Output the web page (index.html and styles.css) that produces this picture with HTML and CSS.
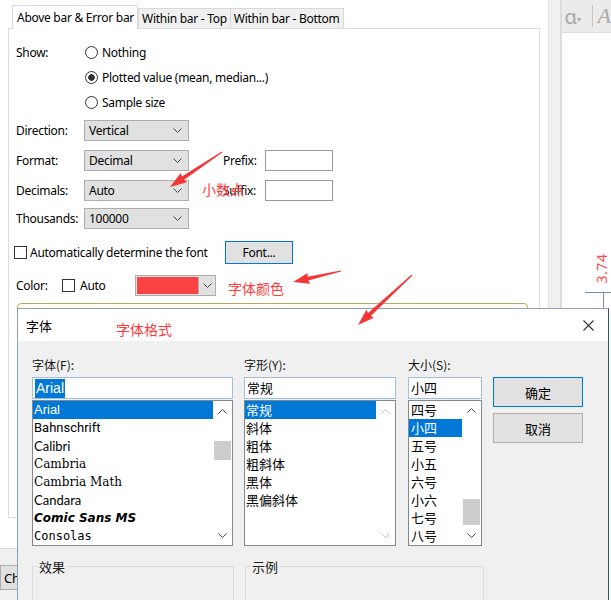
FILE: index.html
```html
<!DOCTYPE html>
<html lang="zh-CN">
<head>
  <meta charset="UTF-8">
  <title>Number labels - 字体</title>
  <link rel="stylesheet" href="styles.css">
</head>
<body>
  <div class="screen">
    <!-- Options window -->
    <div class="main">
      <div class="tabs">
        <div class="tab active">Above bar &amp; Error bar</div>
        <div class="tab">Within bar - Top</div>
        <div class="tab">Within bar - Bottom</div>
      </div>

      <div class="panel">
        <div class="row show-row">
          <span class="lbl">Show:</span>
          <span class="radio"></span><span>Nothing</span>
        </div>
        <div class="row show-row">
          <span class="lbl"></span>
          <span class="radio on"></span><span>Plotted value (mean, median...)</span>
        </div>
        <div class="row show-row">
          <span class="lbl"></span>
          <span class="radio"></span><span>Sample size</span>
        </div>

        <div class="row field-row">
          <span class="lbl">Direction:</span>
          <div class="select"><span>Vertical</span><svg class="chev" width="9" height="5" viewBox="0 0 9 5"><polyline points="0.5,0.5 4.5,4.5 8.5,0.5"/></svg></div>
        </div>
        <div class="row field-row">
          <span class="lbl">Format:</span>
          <div class="select"><span>Decimal</span><svg class="chev" width="9" height="5" viewBox="0 0 9 5"><polyline points="0.5,0.5 4.5,4.5 8.5,0.5"/></svg></div>
          <span class="affix">Prefix:</span>
          <div class="textbox"></div>
        </div>
        <div class="row field-row">
          <span class="lbl">Decimals:</span>
          <div class="select"><span>Auto</span><svg class="chev" width="9" height="5" viewBox="0 0 9 5"><polyline points="0.5,0.5 4.5,4.5 8.5,0.5"/></svg></div>
          <span class="affix">Suffix:</span>
          <div class="textbox"></div>
        </div>
        <div class="row thousands-row">
          <span class="lbl">Thousands:</span>
          <div class="select"><span>100000</span><svg class="chev" width="9" height="5" viewBox="0 0 9 5"><polyline points="0.5,0.5 4.5,4.5 8.5,0.5"/></svg></div>
        </div>

        <div class="row font-row">
          <span class="check first"></span>
          <span class="auto-font">Automatically determine the font</span>
          <div class="btn focus font-btn">Font...</div>
        </div>
        <div class="row color-row">
          <span class="lbl color-lbl">Color:</span>
          <span class="check"></span>
          <span class="auto-color">Auto</span>
          <div class="color-pick">
            <span class="swatch"></span>
            <span class="drop"><svg class="chev" width="9" height="5" viewBox="0 0 9 5"><polyline points="0.5,0.5 4.5,4.5 8.5,0.5"/></svg></span>
          </div>
        </div>
      </div>

      <div class="under"></div>
      <div class="footer"><div class="btn chart-btn">Ch</div></div>
    </div>

    <div class="strip"></div>

    <!-- Chart behind -->
    <div class="chart">
      <div class="toolbar">
        <span class="tb-alpha">α<small>▾</small></span>
        <span class="tb-sep"></span>
        <span class="tb-a">A</span>
      </div>
      <span class="bar-value">3.74</span>
      <span class="err-h"></span>
      <span class="err-v"></span>
    </div>

    <!-- Font dialog -->
    <div class="tip-edge"></div>
    <div class="dialog">
      <div class="titlebar">
        <span>字体</span>
        <svg width="11" height="11" viewBox="0 0 11 11"><path d="M0.5 0.5 L10.5 10.5 M10.5 0.5 L0.5 10.5" stroke="#333" stroke-width="1.1"/></svg>
      </div>
      <div class="dlg-body">
        <div class="cols">
          <div class="col col-face">
            <div class="col-lbl">字体(F):</div>
            <div class="input"><span class="sel-text">Arial</span></div>
            <div class="list">
              <div class="items">
                <div class="item selected f-arial">Arial</div>
                <div class="item f-bahn">Bahnschrift</div>
                <div class="item f-calibri">Calibri</div>
                <div class="item f-cambria">Cambria</div>
                <div class="item f-cambria">Cambria Math</div>
                <div class="item f-candara">Candara</div>
                <div class="item f-comic">Comic Sans MS</div>
                <div class="item f-consolas">Consolas</div>
              </div>
              <div class="scroll">
                <span class="arrow up"><svg width="9" height="5" viewBox="0 0 9 5"><polyline points="0.5,4.5 4.5,0.5 8.5,4.5"/></svg></span>
                <span class="thumb face-thumb"></span>
                <span class="arrow down"><svg width="9" height="5" viewBox="0 0 9 5"><polyline points="0.5,0.5 4.5,4.5 8.5,0.5"/></svg></span>
              </div>
            </div>
          </div>

          <div class="col col-style">
            <div class="col-lbl">字形(Y):</div>
            <div class="input">常规</div>
            <div class="list">
              <div class="items">
                <div class="item selected">常规</div>
                <div class="item">斜体</div>
                <div class="item">粗体</div>
                <div class="item">粗斜体</div>
                <div class="item">黑体</div>
                <div class="item">黑偏斜体</div>
              </div>
              <div class="scroll disabled">
                <span class="arrow up"><svg width="9" height="5" viewBox="0 0 9 5"><polyline points="0.5,4.5 4.5,0.5 8.5,4.5"/></svg></span>
                <span class="arrow down"><svg width="9" height="5" viewBox="0 0 9 5"><polyline points="0.5,0.5 4.5,4.5 8.5,0.5"/></svg></span>
              </div>
            </div>
          </div>

          <div class="col col-size">
            <div class="col-lbl">大小(S):</div>
            <div class="input">小四</div>
            <div class="list">
              <div class="items">
                <div class="item">四号</div>
                <div class="item selected">小四</div>
                <div class="item">五号</div>
                <div class="item">小五</div>
                <div class="item">六号</div>
                <div class="item">小六</div>
                <div class="item">七号</div>
                <div class="item">八号</div>
              </div>
              <div class="scroll">
                <span class="arrow up"><svg width="9" height="5" viewBox="0 0 9 5"><polyline points="0.5,4.5 4.5,0.5 8.5,4.5"/></svg></span>
                <span class="thumb size-thumb"></span>
                <span class="arrow down"><svg width="9" height="5" viewBox="0 0 9 5"><polyline points="0.5,0.5 4.5,4.5 8.5,0.5"/></svg></span>
              </div>
            </div>
          </div>

          <div class="col col-btns">
            <div class="btn focus dlg-btn">确定</div>
            <div class="btn dlg-btn">取消</div>
          </div>
        </div>

        <div class="groups">
          <fieldset class="group effects"><legend>效果</legend></fieldset>
          <fieldset class="group sample"><legend>示例</legend></fieldset>
        </div>
      </div>
    </div>

    <!-- Red annotations -->
    <span class="note note-decimals">小数点</span>
    <span class="note note-color">字体颜色</span>
    <span class="note note-font">字体格式</span>
    <svg class="arrows" width="611" height="600" viewBox="0 0 611 600">
      <g transform="translate(222 152) rotate(146.1)">
        <polygon points="0,-0.6 47,-2 46,-5.5 62.7,0 46,5.5 47,2 0,0.6"/>
      </g>
      <g transform="translate(341 271) rotate(167.1)">
        <polygon points="0,-0.6 34,-2 33,-5.5 49.2,0 33,5.5 34,2 0,0.6"/>
      </g>
      <g transform="translate(412 275) rotate(137.2)">
        <polygon points="0,-0.6 58,-2 57,-5.5 73.6,0 57,5.5 58,2 0,0.6"/>
      </g>
    </svg>
  </div>
</body>
</html>
```

FILE: styles.css
```css
:root {
  --ui-font: "Noto Sans", "Noto Sans CJK SC", sans-serif;
  --cjk-font: "Noto Sans CJK SC", sans-serif;
  --border: #dcdcdc;
  --control: #e1e1e1;
  --control-border: #adadad;
  --focus: #0078d7;
  --note: #ff3b3b;
}
* { box-sizing: border-box; }
body {
  margin: 0;
  background: #fff;
  font-family: var(--ui-font);
  font-size: 12px;
  color: #000;
}
.screen {
  position: relative;
  width: 611px; height: 600px;
  overflow: hidden;
  display: flex;
}

/* options window */
.main { width: 548px; display: flex; flex-direction: column; background: #fff; letter-spacing: -0.28px; }
.tabs {
  display: flex; align-items: flex-end;
  height: 28px; padding-left: 12px;
  position: relative; z-index: 1;
}
.tab {
  height: 20px; padding: 0 3px;
  display: flex; align-items: center;
  background: #f0f0f0;
  border: 1px solid #d9d9d9; border-bottom: none;
  margin-left: -1px; white-space: nowrap;
}
.tab.active {
  height: 24px; margin-bottom: -1px; margin-left: 0;
  background: #fff; padding: 0 3px 0 4px;
}
.tab.active + .tab { margin-left: 0; }

.panel {
  margin-left: 8px;
  width: 532px; height: 490px;
  border: 1px solid var(--border);
  padding: 11px 0 0 7px;
}
.row { display: flex; align-items: center; white-space: nowrap; }
.show-row { height: 25px; }
.field-row { height: 30px; }
.thousands-row { height: 27px; }
.font-row { height: 40px; }
.color-row { height: 26px; }
.lbl { width: 68px; }
.color-lbl { width: 46px; }

.radio {
  width: 13px; height: 13px; border-radius: 50%;
  border: 1px solid #333; background: #fff;
  margin: 0 4px 0 1px;
}
.radio.on { background: radial-gradient(circle, #333 0 3px, #fff 3.6px); }

.select {
  width: 105px; height: 21px;
  background: var(--control); border: 1px solid var(--control-border);
  display: flex; align-items: center; justify-content: space-between;
  padding: 0 6px 0 4px;
}
.chev polyline, .arrow polyline { fill: none; stroke: #444; stroke-width: 1; }
.affix { margin-left: 34px; width: 42px; }
.textbox { width: 68px; height: 21px; background: #fff; border: 1px solid #9a9a9a; }

.check { width: 13px; height: 13px; border: 1px solid #333; background: #fff; }
.check.first { margin-left: -2px; }
.auto-font { width: 198px; padding-left: 3px; }
.btn {
  display: flex; align-items: center; justify-content: center;
  background: var(--control); border: 1px solid var(--control-border);
}
.btn.focus { border-color: var(--focus); }
.font-btn { width: 68px; height: 23px; }
.auto-color { width: 60px; padding-left: 5px; }
.color-pick {
  width: 81px; height: 21px; display: flex;
  border: 1px solid var(--control-border); padding: 1px 0 1px 1px;
  background: var(--control);
}
.swatch { width: 61px; background: #fa4343; }
.drop { flex: 1; display: flex; align-items: center; justify-content: center; border-left: 1px solid var(--control-border); }

.under { height: 30px; }
.footer { flex: 1; background: #f0f0f0; border-top: 1px solid #d9d9d9; padding-top: 16px; }
.chart-btn { width: 40px; height: 25px; justify-content: flex-start; padding-left: 3px; font-size: 13px; }

.strip { width: 14px; background: #f0f0f0; border-left: 1px solid #e6e6e6; border-right: 2px solid #dcdcdc; }

/* chart behind */
.chart { flex: 1; position: relative; background: #fff; }
.toolbar {
  height: 33px; background: #ebebeb; border-bottom: 1px solid #dedede;
  display: flex; align-items: center; color: #a8a8a8;
}
.tb-alpha { font-size: 20px; margin-left: 3px; width: 27px; }
.tb-alpha small { font-size: 8px; vertical-align: middle; }
.tb-sep { width: 1px; height: 22px; background: #c8c8c8; }
.tb-a { font-family: "Liberation Serif", serif; font-style: italic; font-size: 22px; margin-left: 5px; }
.bar-value {
  position: absolute; left: 25px; top: 259px;
  transform: rotate(-90deg);
  font-size: 14px; color: #ff4a4a; letter-spacing: 0.5px;
}
.err-h { position: absolute; left: 23px; right: 0; top: 292px; height: 1px; background: #6f8fb5; }
.err-v { position: absolute; left: 41px; top: 292px; width: 1px; height: 16px; background: #6f8fb5; }

/* font dialog */
.tip-edge {
  position: absolute; left: 17px; top: 303px; width: 511px; height: 20px;
  border: 1px solid #b9ab6a; border-radius: 4px 4px 0 0; background: #fffdf2;
}
.dialog {
  position: absolute; left: 17px; top: 308px;
  width: 592px; height: 300px;
  border: 1px solid #8e9fb8; border-right-color: #2b4f7e;
  background: #f0f0f0;
  font-family: var(--cjk-font);
}
.titlebar {
  height: 32px; background: #fff;
  display: flex; align-items: center; justify-content: space-between;
  padding: 0 14px 0 8px; font-size: 13px;
}
.dlg-body { padding: 16px 0 0 14px; }
.cols { display: flex; }
.col-face { width: 201px; }
.col-style { width: 152px; margin-left: 11px; }
.col-size { width: 74px; margin-left: 12px; }
.col-btns { width: 90px; margin-left: 11px; padding-top: 20px; }
.col-lbl { height: 16px; line-height: 16px; font-size: 12px; margin-bottom: 4px; color: #111; }
.input {
  height: 22px; background: #fff; border: 1px solid #a3bfe0;
  font-size: 13px; line-height: 20px; padding-left: 2px;
}
.sel-text {
  font-family: "Liberation Sans", sans-serif; font-size: 14px;
  background: var(--focus); color: #fff; padding: 1px 1px 2px;
}
.list {
  margin-top: 1px; height: 146px;
  background: #fff; border: 1px solid #828790;
  display: flex;
}
.items { flex: 1; overflow: hidden; }
.item {
  height: 18px; line-height: 18px; padding-left: 1px;
  font-size: 13px; white-space: nowrap;
}
.item.selected { background: var(--focus); color: #fff; }
.col-size .item { padding-left: 2px; }
.scroll { width: 19px; display: flex; flex-direction: column; align-items: stretch; }
.arrow { height: 20px; display: flex; align-items: center; justify-content: center; }
.arrow.down { margin-top: auto; }
.scroll.disabled .arrow polyline { stroke: #c4c4c4; }
.thumb { background: #cdcdcd; margin: 0 1px; }
.face-thumb { margin-top: 20px; height: 19px; }
.size-thumb { margin-top: 78px; height: 27px; }
.dlg-btn { height: 30px; font-size: 13px; }
.dlg-btn + .dlg-btn { margin-top: 6px; }

.f-arial { font-family: "Liberation Sans", sans-serif; }
.f-bahn { font-family: Roboto, sans-serif; }
.f-calibri, .f-candara { font-family: Lato, sans-serif; }
.f-cambria { font-family: "DejaVu Serif", serif; font-size: 12px; }
.f-comic { font-family: "DejaVu Sans", sans-serif; font-weight: bold; font-style: italic; font-size: 12px; }
.f-consolas { font-family: "DejaVu Sans Mono", monospace; font-size: 12px; }

.groups { display: flex; margin-top: 11px; }
.group {
  margin: 0; padding: 0 0 0 5px;
  height: 60px; border: 1px solid #dcdcdc;
}
.group legend { padding: 0 1px; font-size: 13px; color: #222; }
.effects { width: 202px; }
.sample { width: 239px; margin-left: 11px; }

/* annotations */
.note { position: absolute; font-family: var(--cjk-font); font-size: 14px; color: var(--note); line-height: 18px; }
.note-decimals { left: 202px; top: 180px; }
.note-color { left: 228px; top: 279px; }
.note-font { left: 116px; top: 320px; }
.arrows { position: absolute; left: 0; top: 0; pointer-events: none; }
.arrows polygon { fill: #f43636; }
```
